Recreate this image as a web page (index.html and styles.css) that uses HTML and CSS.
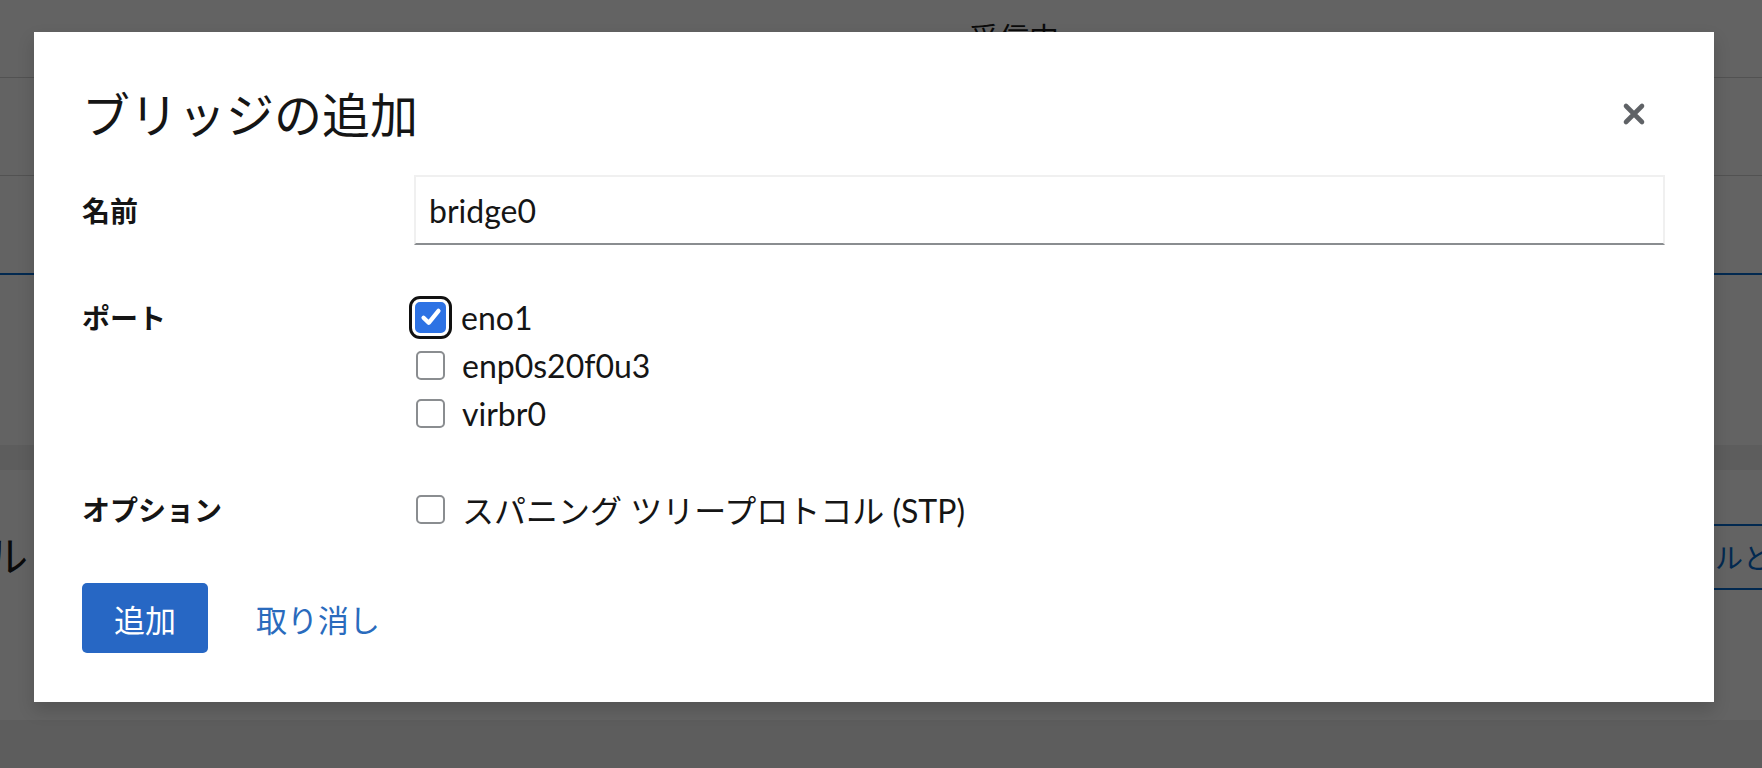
FILE: index.html
```html
<!DOCTYPE html>
<html lang="ja">
<head>
<meta charset="utf-8">
<title>ブリッジの追加</title>
<link rel="stylesheet" href="styles.css">
</head>
<body>
<div class="page">
  <div class="bg-row bg-head"><span class="bg-col">受信中</span></div>
  <div class="bg-row bg-r2"></div>
  <div class="bg-row bg-r3"></div>
  <div class="bg-row bg-r4"></div>
  <div class="bg-gap"></div>
  <div class="bg-card">
    <h2 class="bg-title">ファイアウォール</h2>
    <span class="bg-btn">ルールとゾーンの編集</span>
  </div>

  <div class="backdrop">
    <div class="modal" role="dialog">
      <div class="modal-header">
        <h1 class="modal-title">ブリッジの追加</h1>
        <button class="close" aria-label="閉じる">
          <svg viewBox="0 0 24 24" width="24" height="24"><path d="M4 4 L20 20 M20 4 L4 20" stroke="#5f6266" stroke-width="4.6" stroke-linecap="round" fill="none"/></svg>
        </button>
      </div>

      <div class="form">
        <div class="label label-center">名前</div>
        <input class="text-input" type="text" value="bridge0">

        <div class="label">ポート</div>
        <div class="checks">
          <label class="check"><span class="box checked"><svg viewBox="0 0 16 16" width="26" height="26"><path d="M3.4 8.4 L6.6 11.6 L12.6 4.2" stroke="#fff" stroke-width="2.6" stroke-linecap="round" stroke-linejoin="round" fill="none"/></svg></span><span>eno1</span></label>
          <label class="check"><span class="box"></span><span>enp0s20f0u3</span></label>
          <label class="check"><span class="box"></span><span>virbr0</span></label>
        </div>

        <div class="label">オプション</div>
        <div class="checks">
          <label class="check"><span class="box"></span><span>スパニング ツリープロトコル (STP)</span></label>
        </div>
      </div>

      <div class="footer">
        <button class="btn-primary">追加</button>
        <button class="btn-link">取り消し</button>
      </div>
    </div>
  </div>
</div>
</body>
</html>
```

FILE: styles.css
```css
html, body {
  margin: 0;
  padding: 0;
}

body {
  font-family: "Lato", "Noto Sans CJK JP", sans-serif;
  color: #151515;
  background: #f0f0f0;
}

.page {
  position: relative;
  width: 1762px;
  height: 768px;
  overflow: hidden;
  background: #f0f0f0;
}

/* background page (under the backdrop) */
.bg-row {
  background: #ffffff;
  box-sizing: border-box;
}

.bg-head {
  height: 78px;
  border-bottom: 1px solid #d2d2d2;
  padding: 14px 0 0 969px;
}

.bg-col {
  font-family: "Noto Sans CJK JP", sans-serif;
  font-size: 30px;
  color: #151515;
}

.bg-r2 {
  height: 98px;
  border-bottom: 1px solid #d2d2d2;
}

.bg-r3 {
  height: 99px;
  border-bottom: 2px solid #0066cc;
}

.bg-r4 {
  height: 170px;
}

.bg-gap {
  height: 25px;
}

.bg-card {
  height: 250px;
  background: #ffffff;
  display: flex;
  flex-wrap: nowrap;
  align-items: flex-start;
  padding-top: 54px;
  box-sizing: border-box;
}

.bg-card > * {
  flex-shrink: 0;
}

.bg-title {
  margin: 6px 0 0 -308px;
  font-family: "Noto Sans CJK JP", sans-serif;
  font-weight: 400;
  font-size: 42px;
  line-height: 48px;
  white-space: nowrap;
  color: #151515;
}

.bg-btn {
  margin: 0 0 0 1607px;
  height: 66px;
  box-sizing: border-box;
  border: 2px solid #0066cc;
  border-radius: 4px;
  padding: 0 22px;
  display: flex;
  align-items: center;
  font-family: "Noto Sans CJK JP", sans-serif;
  font-size: 28px;
  color: #0066cc;
  white-space: nowrap;
}

.backdrop {
  position: absolute;
  inset: 0;
  background: rgba(3, 3, 3, 0.62);
}

/* modal */
.modal {
  width: 1680px;
  height: 670px;
  box-sizing: border-box;
  margin: 32px 0 0 34px;
  padding: 48px 49px 49px 48px;
  background: #ffffff;
  box-shadow: 0 8px 16px rgba(3, 3, 3, 0.16);
  display: flex;
  flex-direction: column;
}

.modal-header {
  height: 64px;
  margin-bottom: 31px;
  display: flex;
  align-items: center;
  justify-content: space-between;
}

.modal-title {
  margin: 0;
  font-family: "Noto Sans CJK JP", sans-serif;
  font-weight: 400;
  font-size: 48px;
  line-height: 64px;
  color: #151515;
}

.close {
  width: 24px;
  height: 24px;
  margin: 4px 19px 0 0;
  padding: 0;
  border: none;
  background: none;
  display: flex;
}

.form {
  display: grid;
  grid-template-columns: 332px 1fr;
  row-gap: 48px;
}

.label {
  font-family: "Noto Sans CJK JP", sans-serif;
  font-weight: 700;
  font-size: 28px;
  line-height: 48px;
  color: #151515;
}

.label-center {
  align-self: center;
}

.text-input {
  height: 70px;
  box-sizing: border-box;
  margin: 0;
  border: 2px solid #f0f0f0;
  border-bottom-color: #8a8d90;
  padding: 0 13px;
  font-family: "Lato", "Noto Sans CJK JP", sans-serif;
  font-size: 32px;
  color: #151515;
  background: #ffffff;
  outline: none;
}

.checks {
  display: flex;
  flex-direction: column;
}

.check {
  height: 48px;
  display: flex;
  align-items: center;
  gap: 17px;
  font-size: 32px;
  color: #151515;
  white-space: nowrap;
}

.box {
  flex: none;
  width: 29px;
  height: 29px;
  box-sizing: border-box;
  margin-left: 2px;
  border: 2px solid #8a8d90;
  border-radius: 5px;
  background: #ffffff;
  display: flex;
  align-items: center;
  justify-content: center;
}

.box.checked {
  width: 31px;
  height: 31px;
  margin-left: 1px;
  margin-right: -2px;
  background: #2d72e4;
  border-color: #2d72e4;
  outline: 3px solid #111111;
  outline-offset: 3px;
  border-radius: 5px;
}

.footer {
  margin-top: 50px;
  display: flex;
  align-items: center;
}

.btn-primary {
  height: 70px;
  padding: 0 32px;
  border: none;
  border-radius: 5px;
  background: #2767c4;
  color: #ffffff;
  font-family: "Noto Sans CJK JP", sans-serif;
  font-size: 31px;
}

.btn-link {
  height: 70px;
  margin-left: 24px;
  padding: 0 24px;
  border: none;
  background: none;
  color: #2a6bbd;
  font-family: "Noto Sans CJK JP", sans-serif;
  font-size: 31px;
}
```
